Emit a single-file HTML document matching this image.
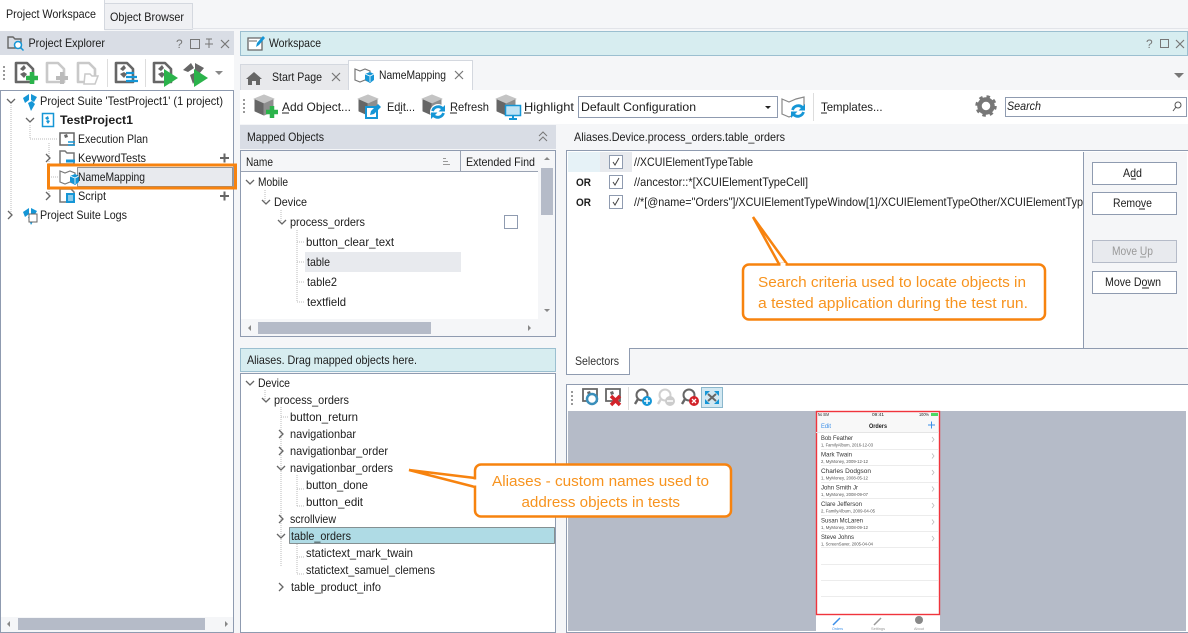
<!DOCTYPE html>
<html><head><meta charset="utf-8"><style>
html,body{margin:0;padding:0;background:#f5f6f8;width:1188px;height:633px;overflow:hidden}
svg{display:block}
text{font-family:"Liberation Sans",sans-serif;font-size:12px;fill:#1c1c1c}
.c{fill:#f7931e;font-size:15px}
.p{font-size:6.5px;fill:#333}
.s{font-size:4.5px;fill:#555}
</style></head><body>
<svg width="1188" height="633" viewBox="0 0 1188 633" xmlns="http://www.w3.org/2000/svg">
<defs>
<g id="doc"><path d="M2 21V2h11l6 6v13z" fill="#fff" stroke="#666" stroke-width="2.6" stroke-linejoin="round"/><path d="M6 8l4-4 2 3-3 3zM6 13l4-2 3 2-3 4z" fill="#666"/></g>
<g id="docd"><path d="M2 21V2h11l6 6v13z" fill="#fff" stroke="#c9c9c9" stroke-width="2.6" stroke-linejoin="round"/></g>
<g id="cube"><path d="M1 6l10-4 10 4-10 4z" fill="#c4c4c4" stroke="#c4c4c4" stroke-linejoin="round"/><path d="M11 11v11l-9-4V7z" fill="#666" stroke="#666" stroke-linejoin="round"/><path d="M11 11v11l9-4V7z" fill="#8e8e8e" stroke="#8e8e8e" stroke-linejoin="round"/></g>
<g id="logo"><path d="M2 5l6-4v6l-4 3zM10 1l6 3-3 5-3-2zM7 10l4-2 3 3-4 7z" fill="#1596d6"/></g>
<g id="nm"><path d="M1 3l5 2 5-2 5 2v11l-5-2-5 2-5-2z" fill="#fff" stroke="#777" stroke-width="1.2"/><path d="M11 8l5-2 4 2v6l-4 3-5-3z" fill="#1596d6"/><path d="M11 8l5 2 4-2M16 10v6" stroke="#fff" stroke-width=".8" fill="none"/></g>
<g id="lens"><circle cx="8" cy="7" r="5.5" fill="#fff" stroke="#666" stroke-width="2"/><path d="M4 11l-3 5" stroke="#666" stroke-width="2.4"/></g>
<g id="ref"><path d="M-5.5-1A6 6 0 0 1 4.500-3.500M5.500 1A6 6 0 0 1-4.500 3.500" fill="none" stroke="#1596d6" stroke-width="2.800"/><path d="M7-7v6.500h-6.500zM-7 7v-6.500h6.500z" fill="#1596d6"/></g>
<path id="down" d="M0 0l4 4 4-4" fill="none" stroke="#666" stroke-width="1.3"/>
<path id="right" d="M0 0l4 4-4 4" fill="none" stroke="#666" stroke-width="1.3"/>
</defs>

<!-- top tabs -->
<rect x="0" y="0" width="1188" height="31" fill="#f5f6f8"/>
<rect x="104.500" y="3.500" width="88" height="26" fill="#eff0f3" stroke="#d4d8df"/>
<path d="M192 28.500H1188" stroke="#e2e4e9"/>
<rect x="0" y="0" width="104.500" height="31" fill="#fff"/>
<path d="M104.500 0V30" stroke="#d4d8df"/>
<text x="6" y="18" textLength="90" lengthAdjust="spacingAndGlyphs">Project Workspace</text>
<text x="110" y="21" textLength="74" lengthAdjust="spacingAndGlyphs">Object Browser</text>

<!-- project explorer -->
<rect x="0" y="31" width="234" height="24" fill="#d9dde5"/>
<path d="M8 37h5l2 2h6v9H8z" fill="none" stroke="#666" stroke-width="1.400"/>
<circle cx="18" cy="45" r="3.500" fill="#fff" stroke="#1596d6" stroke-width="1.500"/><path d="M20.500 47.500l3 3" stroke="#1596d6" stroke-width="1.500"/>
<text x="28.500" y="47" textLength="76.500" lengthAdjust="spacingAndGlyphs">Project Explorer</text>
<text x="176" y="48" style="fill:#777">?</text>
<rect x="190.500" y="39.500" width="9" height="9" fill="none" stroke="#777"/>
<path d="M206 39h6M209 39v5M205 44h8M209 44v4" stroke="#777" fill="none"/>
<path d="M221 40l8 8M229 40l-8 8" stroke="#777" stroke-width="1.200"/>

<rect x="0" y="55" width="234" height="35" fill="#fff"/>
<path d="M4 66v2M4 70v2M4 74v2M4 78v2" stroke="#999" stroke-width="2"/>
<use href="#doc" x="14" y="61"/>
<path d="M32 72v12M26 78h12" stroke="#2bb34b" stroke-width="4.500"/>
<use href="#docd" x="45" y="61"/>
<path d="M62 72v12M56 78h12" stroke="#bbb" stroke-width="4"/>
<use href="#docd" x="76" y="61"/>
<path d="M85 74h5l2 2h6l-3 8H84z" fill="#fff" stroke="#c9c9c9" stroke-width="1.500"/>
<path d="M107.500 59v28" stroke="#ddd"/>
<use href="#doc" x="114" y="61"/>
<path d="M126 73h8M126 77h11M126 81h12" stroke="#1596d6" stroke-width="2.200"/>
<path d="M145.500 59v28" stroke="#ddd"/>
<use href="#doc" x="152" y="61"/>
<path d="M164 69l14 9-14 9z" fill="#2bb34b"/>
<path d="M183 70l8-7 3 5-6 4zM195 63l9 5-5 6-4-3zM190 75l4-2 4 3-5 8z" fill="#666"/>
<path d="M194 69l14 9-14 9z" fill="#2bb34b"/>
<path d="M215 71h8l-4 4z" fill="#888"/>

<rect x="0.500" y="90.500" width="233" height="542" fill="#fff" stroke="#8f9bb0"/>
<rect x="1" y="617" width="232" height="15" fill="#f5f6f8"/>
<rect x="18" y="618" width="187" height="12" fill="#b5bbc8"/>
<path d="M7 624l3-3v6z" fill="#888"/><path d="M225 621l3 3-3 3z" fill="#888"/>
<!-- tree lines -->
<path d="M11 105V215M30 125V139H58M49 143V196M49 177H58" stroke="#bbb" stroke-dasharray="1 1" fill="none"/>
<use href="#down" x="7" y="99"/><use href="#down" x="26" y="118"/>
<use href="#right" x="46" y="154"/><use href="#right" x="46" y="192"/><use href="#right" x="8" y="211"/>
<use href="#logo" x="21" y="93"/>
<rect x="42.500" y="113.500" width="11" height="13" fill="#fff" stroke="#1596d6" stroke-width="1.500"/><path d="M45 118l3-2 1 3-2 1zM46 121l2-1 2 1-2 3z" fill="#1596d6"/>
<path d="M60 133h14v12H60z" fill="#fff" stroke="#666" stroke-width="1.500"/><path d="M64 135l3-1 1 3-3 1z" fill="#666"/><path d="M68 142h7M68 145h7" stroke="#1596d6" stroke-width="1.500"/>
<path d="M60 164v-13h5l2 2h7v11z" fill="#fff" stroke="#777" stroke-width="1.500"/><path d="M66 161h9" stroke="#1596d6" stroke-width="3"/>
<path d="M60 202v-13h11l3 3v10z" fill="#fff" stroke="#777" stroke-width="1.500"/><rect x="66" y="193" width="9" height="10" fill="#1596d6"/><path d="M68 196h5M68 198h5M68 200h5" stroke="#fff"/>
<use href="#logo" x="21" y="207"/>
<rect x="29" y="214" width="8" height="8" fill="#fff" stroke="#666"/>
<text x="40" y="105" textLength="183" lengthAdjust="spacingAndGlyphs">Project Suite 'TestProject1' (1 project)</text>
<text x="60" y="124" textLength="73" lengthAdjust="spacingAndGlyphs" font-weight="bold">TestProject1</text>
<text x="78" y="143" textLength="70" lengthAdjust="spacingAndGlyphs">Execution Plan</text>
<text x="78" y="162" textLength="68" lengthAdjust="spacingAndGlyphs">KeywordTests</text>
<rect x="77.500" y="167.500" width="155" height="19" fill="#e8eaee" stroke="#333" stroke-dasharray="1 1"/>
<use href="#nm" x="59" y="168"/>
<text x="78" y="181" textLength="67" lengthAdjust="spacingAndGlyphs">NameMapping</text>
<text x="78" y="200" textLength="28" lengthAdjust="spacingAndGlyphs">Script</text>
<text x="40" y="219" textLength="87" lengthAdjust="spacingAndGlyphs">Project Suite Logs</text>
<path d="M220 158h9M224.500 153.500v9M220 196h9M224.500 191.500v9" stroke="#666" stroke-width="2"/>
<rect x="48.500" y="165" width="187" height="23" fill="none" stroke="#f7830f" stroke-width="3"/>

<!-- workspace -->
<rect x="240.500" y="31.500" width="947" height="24" fill="#d7edf0" stroke="#9bbfd0"/>
<path d="M248 38h14v12h-14z" fill="#fff" stroke="#666" stroke-width="1.300"/><path d="M249 41h8" stroke="#666"/>
<path d="M256 47l1-4 6-7 2 2-6 7z" fill="#1596d6"/>
<text x="269" y="47" textLength="52" lengthAdjust="spacingAndGlyphs">Workspace</text>
<text x="1146" y="48" style="fill:#777">?</text>
<rect x="1160.500" y="39.500" width="8" height="8" fill="none" stroke="#777"/>
<path d="M1176 40l8 8M1184 40l-8 8" stroke="#777" stroke-width="1.200"/>

<!-- doc tabs -->
<rect x="240.500" y="64.500" width="108" height="26" fill="#e8e9ec" stroke="#d4d8df"/>
<path d="M254 72l-8 7h2v6h4v-4h4v4h4v-6h2z" fill="#666"/>
<text x="272" y="81" textLength="50" lengthAdjust="spacingAndGlyphs">Start Page</text>
<path d="M332 73l8 8M340 73l-8 8" stroke="#777" stroke-width="1.200"/>
<rect x="348.500" y="60.500" width="124" height="30" fill="#fff" stroke="#d4d8df"/>
<use href="#nm" x="354" y="66"/>
<text x="379" y="79" textLength="67" lengthAdjust="spacingAndGlyphs">NameMapping</text>
<path d="M455 71l8 8M463 71l-8 8" stroke="#777" stroke-width="1.200"/>
<path d="M1174 73h10l-5 5z" fill="#777"/>

<!-- toolbar -->
<rect x="240" y="90" width="948" height="34" fill="#fff"/>
<rect x="349" y="88" width="123" height="3" fill="#fff"/>
<path d="M244 99v2M244 103v2M244 107v2M244 111v2" stroke="#999" stroke-width="2"/>
<use href="#cube" x="253" y="93"/>
<path d="M272 106v12M266 112h12" stroke="#2bb34b" stroke-width="4.500"/>
<text x="282" y="111" textLength="69" lengthAdjust="spacingAndGlyphs">Add Object...</text>
<path d="M282 113h7" stroke="#222"/>
<use href="#cube" x="357" y="93"/>
<rect x="366" y="107" width="11" height="11" fill="#fff" stroke="#1596d6" stroke-width="2"/>
<path d="M370 115l1-4 7-7 3 3-7 7z" fill="#1596d6"/>
<text x="387" y="111" textLength="28" lengthAdjust="spacingAndGlyphs">Edit...</text>
<path d="M399 113h3" stroke="#222"/>
<use href="#cube" x="421" y="93"/>
<circle cx="438" cy="112" r="8" fill="#fff"/><use href="#ref" x="438" y="112"/>
<text x="450" y="111" textLength="39" lengthAdjust="spacingAndGlyphs">Refresh</text>
<path d="M450 113h7" stroke="#222"/>
<use href="#cube" x="495" y="93"/>
<rect x="505.500" y="105.500" width="15" height="10" fill="#bfe3f5" stroke="#1596d6" stroke-width="1.500"/>
<path d="M513 115v3M509 119h8" stroke="#1596d6" stroke-width="2"/>
<text x="524" y="111" textLength="50" lengthAdjust="spacingAndGlyphs">Highlight</text>
<path d="M524 113h7" stroke="#222"/>
<rect x="578.500" y="96.500" width="199" height="21" fill="#fff" stroke="#8f9bb0"/>
<text x="581" y="111" textLength="115" lengthAdjust="spacingAndGlyphs">Default Configuration</text>
<path d="M765 106h6l-3 3z" fill="#222"/>
<path d="M782 99l7 3 7-3 8-2v12h-8v5l-7 3-7-3z" fill="#fff" stroke="#888" stroke-width="1.200"/>
<circle cx="798" cy="111" r="8" fill="#fff"/><use href="#ref" x="798" y="111"/>
<path d="M813.500 93v28" stroke="#ddd"/>
<text x="821" y="111" textLength="61.500" lengthAdjust="spacingAndGlyphs">Templates...</text>
<path d="M821 113h6" stroke="#222"/>
<circle cx="986" cy="106" r="6.500" fill="none" stroke="#777" stroke-width="4.500"/>
<circle cx="986" cy="106" r="9.500" fill="none" stroke="#777" stroke-width="2.500" stroke-dasharray="3.500 4"/>
<rect x="1005.500" y="97.500" width="181" height="19" fill="#fff" stroke="#8f9bb0"/>
<text x="1007" y="110" textLength="34" lengthAdjust="spacingAndGlyphs" font-style="italic">Search</text>
<circle cx="1178" cy="105" r="3" fill="none" stroke="#555"/><path d="M1176 107l-3 4" stroke="#555"/>

<!-- Mapped Objects -->
<rect x="240" y="125" width="316" height="24" fill="#d9dde5"/>
<text x="247" y="141" textLength="77" lengthAdjust="spacingAndGlyphs">Mapped Objects</text>
<path d="M539 136l4-4 4 4M539 141l4-4 4 4" fill="none" stroke="#777"/>
<rect x="240.500" y="150.500" width="315" height="186" fill="#fff" stroke="#8f9bb0"/>
<rect x="241" y="151" width="297" height="20" fill="#f5f6f8"/>
<path d="M241 171.500H538M460.500 151v20" stroke="#9aa3b3"/>
<text x="246" y="166" textLength="27" lengthAdjust="spacingAndGlyphs">Name</text>
<path d="M443 158.500h3M443 161.500h5M443 164.500h7" stroke="#999"/>
<text x="466" y="166" textLength="69" lengthAdjust="spacingAndGlyphs">Extended Find</text>
<rect x="538" y="151" width="17" height="185" fill="#f5f6f8"/>
<rect x="241" y="319" width="314" height="17" fill="#f5f6f8"/>
<rect x="541" y="168" width="12" height="47" fill="#b5bbc8"/>
<rect x="258" y="322" width="173" height="12" fill="#b5bbc8"/>
<path d="M544 160l3-3 3 3zM544 309l3 3 3-3zM251 325l-3 3 3 3zM528 325l3 3-3 3z" fill="#888"/>
<rect x="305" y="252" width="156" height="20" fill="#e8eaee"/>
<path d="M265 190v12M281 210v12M297 230v72M297 242h8M297 262h8M297 282h8M297 302h8" stroke="#bbb" stroke-dasharray="1 1" fill="none"/>
<use href="#down" x="246" y="180"/><use href="#down" x="262" y="200"/><use href="#down" x="278" y="220"/>
<text x="258" y="186" textLength="30" lengthAdjust="spacingAndGlyphs">Mobile</text>
<text x="274" y="206" textLength="33" lengthAdjust="spacingAndGlyphs">Device</text>
<text x="290" y="226" textLength="75" lengthAdjust="spacingAndGlyphs">process_orders</text>
<text x="306" y="246" textLength="88" lengthAdjust="spacingAndGlyphs">button_clear_text</text>
<text x="307" y="266" textLength="23" lengthAdjust="spacingAndGlyphs">table</text>
<text x="307" y="286" textLength="30" lengthAdjust="spacingAndGlyphs">table2</text>
<text x="307" y="306" textLength="39" lengthAdjust="spacingAndGlyphs">textfield</text>
<rect x="504.500" y="215.500" width="13" height="13" fill="#fff" stroke="#8f9bb0"/>

<!-- Aliases -->
<rect x="240.500" y="348.500" width="315" height="23" fill="#d7edf0" stroke="#9bbfd0"/>
<text x="247" y="364" textLength="170" lengthAdjust="spacingAndGlyphs">Aliases. Drag mapped objects here.</text>
<rect x="240.500" y="373.500" width="315" height="259" fill="#fff" stroke="#8f9bb0"/>
<rect x="289.500" y="527.500" width="265" height="16" fill="#afdbe5" stroke="#333" stroke-dasharray="1 1"/>
<path d="M265 390v10M281 407v160M281 417h8M297 475v31M297 489h8M297 506h8M297 544v30M297 557h8M297 574h8" stroke="#bbb" stroke-dasharray="1 1" fill="none"/>
<use href="#down" x="246" y="381"/><use href="#down" x="262" y="398"/>
<use href="#right" x="279" y="430"/><use href="#right" x="279" y="447"/><use href="#down" x="277" y="466"/>
<use href="#right" x="279" y="515"/><use href="#down" x="277" y="534"/><use href="#right" x="279" y="583"/>
<text x="258" y="387" textLength="32" lengthAdjust="spacingAndGlyphs">Device</text>
<text x="274" y="404" textLength="75" lengthAdjust="spacingAndGlyphs">process_orders</text>
<text x="290" y="421" textLength="68" lengthAdjust="spacingAndGlyphs">button_return</text>
<text x="290" y="438" textLength="66" lengthAdjust="spacingAndGlyphs">navigationbar</text>
<text x="290" y="455" textLength="98" lengthAdjust="spacingAndGlyphs">navigationbar_order</text>
<text x="290" y="472" textLength="103" lengthAdjust="spacingAndGlyphs">navigationbar_orders</text>
<text x="306" y="489" textLength="62" lengthAdjust="spacingAndGlyphs">button_done</text>
<text x="306" y="506" textLength="57" lengthAdjust="spacingAndGlyphs">button_edit</text>
<text x="290" y="523" textLength="46" lengthAdjust="spacingAndGlyphs">scrollview</text>
<text x="291" y="540" textLength="60" lengthAdjust="spacingAndGlyphs">table_orders</text>
<text x="306" y="557" textLength="107" lengthAdjust="spacingAndGlyphs">statictext_mark_twain</text>
<text x="306" y="574" textLength="129" lengthAdjust="spacingAndGlyphs">statictext_samuel_clemens</text>
<text x="291" y="591" textLength="90" lengthAdjust="spacingAndGlyphs">table_product_info</text>

<!-- Selectors -->
<text x="574" y="141" textLength="211" lengthAdjust="spacingAndGlyphs">Aliases.Device.process_orders.table_orders</text>
<rect x="566.500" y="150.500" width="622" height="198" fill="#fff" stroke="#8f9bb0"/>
<rect x="568" y="152" width="32" height="20" fill="#e6f2f7"/>
<rect x="600" y="152" width="32" height="20" fill="#e8eaee"/>
<g fill="#fff" stroke="#8f9bb0"><rect x="609.500" y="155.500" width="13" height="13"/><rect x="609.500" y="175.500" width="13" height="13"/><rect x="609.500" y="195.500" width="13" height="13"/></g>
<path d="M613 162l2 3 4-7M613 182l2 3 4-7M613 202l2 3 4-7" fill="none" stroke="#444"/>
<text x="576" y="186" textLength="15" lengthAdjust="spacingAndGlyphs" font-weight="bold" style="font-size:11px">OR</text>
<text x="576" y="206" textLength="15" lengthAdjust="spacingAndGlyphs" font-weight="bold" style="font-size:11px">OR</text>
<text x="634" y="166" textLength="119" lengthAdjust="spacingAndGlyphs">//XCUIElementTypeTable</text>
<text x="634" y="186" textLength="174" lengthAdjust="spacingAndGlyphs">//ancestor::*[XCUIElementTypeCell]</text>
<text x="634" y="206" textLength="449" lengthAdjust="spacingAndGlyphs">//*[@name="Orders"]/XCUIElementTypeWindow[1]/XCUIElementTypeOther/XCUIElementTyp</text>
<rect x="1083" y="152" width="104" height="196" fill="#f5f6f8"/>
<path d="M1083.500 152v196" stroke="#8f9bb0"/>
<g fill="#fff" stroke="#8f9bb0"><rect x="1092.500" y="162.500" width="84" height="22"/><rect x="1092.500" y="192.500" width="84" height="22"/><rect x="1092.500" y="271.500" width="84" height="22"/></g>
<rect x="1092.500" y="240.500" width="84" height="22" fill="#e8eaee" stroke="#b5bbc8"/>
<text x="1123" y="177" textLength="19" lengthAdjust="spacingAndGlyphs">Add</text>
<path d="M1131 179h5" stroke="#222"/>
<text x="1113" y="207" textLength="39" lengthAdjust="spacingAndGlyphs">Remove</text>
<path d="M1139 209h6" stroke="#222"/>
<text x="1112" y="255" textLength="41" lengthAdjust="spacingAndGlyphs" style="fill:#999">Move Up</text>
<path d="M1140 257h6" stroke="#999"/>
<text x="1105" y="286" textLength="56" lengthAdjust="spacingAndGlyphs">Move Down</text>
<path d="M1142 288h7" stroke="#222"/>
<path d="M566.500 348.500V374.500H629.500V348.500" fill="#fff" stroke="#8f9bb0"/>
<rect x="567" y="347" width="62" height="3" fill="#fff"/>
<text x="575" y="365" textLength="44" lengthAdjust="spacingAndGlyphs" style="fill:#333">Selectors</text>

<!-- preview -->
<rect x="566.500" y="384.500" width="622" height="248" fill="#fff" stroke="#8f9bb0"/>
<rect x="568" y="411" width="618" height="220" fill="#b5bbc8"/>
<path d="M572 391v2M572 395v2M572 399v2M572 403v2" stroke="#999" stroke-width="2"/>
<path d="M583 389h14v12h-14z" fill="#fff" stroke="#666" stroke-width="1.800"/>
<path d="M587 392l3-1 1 3-3 1z" fill="#666"/>
<circle cx="592" cy="399" r="5" fill="#fff" stroke="#3a8fbb" stroke-width="2.500"/>
<path d="M606 389h14v12h-14z" fill="#fff" stroke="#666" stroke-width="1.800"/>
<path d="M610 392l3-1 1 3-3 1z" fill="#666"/>
<path d="M611 396l9 9M620 396l-9 9" stroke="#d2232a" stroke-width="3.500"/>
<path d="M628.500 387v23" stroke="#ddd"/>
<use href="#lens" x="634" y="388"/><circle cx="647" cy="401" r="5" fill="#1596d6"/><path d="M644 401h6M647 398v6" stroke="#fff" stroke-width="1.500"/>
<g opacity=".3"><use href="#lens" x="657" y="388"/></g><circle cx="670" cy="401" r="5" fill="#ccc"/><path d="M667 401h6" stroke="#fff" stroke-width="1.500"/>
<use href="#lens" x="681" y="388"/><circle cx="694" cy="401" r="5" fill="#d2232a"/><path d="M692 399l4 4M696 399l-4 4" stroke="#fff" stroke-width="1.300"/>
<rect x="701.500" y="387.500" width="21" height="20" fill="#d2e8f2" stroke="#8bb7cc"/>
<path d="M705 391h5l-5 5zM719 391h-5l5 5zM705 404h5l-5-5zM719 404h-5l5-5z" fill="#1596d6"/>
<path d="M708 394l8 7M716 394l-8 7" stroke="#666" stroke-width="2"/>

<!-- phone -->
<rect x="816" y="411" width="124" height="220" fill="#fff"/>
<rect x="816" y="412" width="124" height="20" fill="#f8f8f8"/>
<rect x="816.500" y="411.500" width="123" height="203" fill="none" stroke="#f0343c" stroke-width="1.400"/>
<g style="filter:blur(.3px)">
<text x="818" y="416" style="font-size:4.5px" textLength="11" lengthAdjust="spacingAndGlyphs">No SIM</text>
<text x="872" y="416" style="font-size:4.5px" textLength="12" lengthAdjust="spacingAndGlyphs">09:41</text>
<text x="919" y="416" style="font-size:4.5px" textLength="10" lengthAdjust="spacingAndGlyphs">100%</text>
<rect x="931" y="413" width="7" height="3" fill="#4cd964"/>
<text x="821" y="428" style="font-size:6.500px;fill:#3b8fe8" textLength="10" lengthAdjust="spacingAndGlyphs">Edit</text>
<text x="869" y="428" style="font-size:6.500px;font-weight:bold" textLength="18" lengthAdjust="spacingAndGlyphs">Orders</text>
<path d="M928 425h7M931.500 421.500v7" stroke="#3b8fe8"/>
<text class="p" x="821" y="440" textLength="32" lengthAdjust="spacingAndGlyphs">Bob Feather</text>
<text class="s" x="821" y="446.500" textLength="52" lengthAdjust="spacingAndGlyphs">1, FamilyAlbum, 2016-12-03</text>
<text class="p" x="821" y="456.500" textLength="31" lengthAdjust="spacingAndGlyphs">Mark Twain</text>
<text class="s" x="821" y="463" textLength="47" lengthAdjust="spacingAndGlyphs">2, MyMoney, 2009-12-12</text>
<text class="p" x="821" y="473" textLength="50" lengthAdjust="spacingAndGlyphs">Charles Dodgson</text>
<text class="s" x="821" y="479.500" textLength="47" lengthAdjust="spacingAndGlyphs">1, MyMoney, 2008-05-12</text>
<text class="p" x="821" y="489.500" textLength="37" lengthAdjust="spacingAndGlyphs">John Smith Jr</text>
<text class="s" x="821" y="496" textLength="47" lengthAdjust="spacingAndGlyphs">1, MyMoney, 2008-09-07</text>
<text class="p" x="821" y="506" textLength="41" lengthAdjust="spacingAndGlyphs">Clare Jefferson</text>
<text class="s" x="821" y="512.500" textLength="54" lengthAdjust="spacingAndGlyphs">2, FamilyAlbum, 2009-04-05</text>
<text class="p" x="821" y="522.500" textLength="42" lengthAdjust="spacingAndGlyphs">Susan McLaren</text>
<text class="s" x="821" y="529" textLength="47" lengthAdjust="spacingAndGlyphs">1, MyMoney, 2008-09-12</text>
<text class="p" x="821" y="539" textLength="33" lengthAdjust="spacingAndGlyphs">Steve Johns</text>
<text class="s" x="821" y="545.500" textLength="52" lengthAdjust="spacingAndGlyphs">1, ScreenSaver, 2005-04-04</text>
<path d="M833 625l7-7" stroke="#3b8fe8" stroke-width="1.500"/>
<path d="M874 625l7-7" stroke="#999" stroke-width="1.500"/>
<circle cx="919" cy="620" r="4" fill="#888"/>
<text x="832" y="630" style="font-size:4px;fill:#3b8fe8" textLength="11" lengthAdjust="spacingAndGlyphs">Orders</text>
<text x="871" y="630" style="font-size:4px;fill:#999" textLength="14" lengthAdjust="spacingAndGlyphs">Settings</text>
<text x="914" y="630" style="font-size:4px;fill:#999" textLength="10" lengthAdjust="spacingAndGlyphs">About</text>
</g>
<path d="M816 432.500H939" stroke="#e5e5e5"/>
<path d="M821 449.500H938M821 465.500H938M821 482.500H938M821 498.500H938M821 515.500H938M821 531.500H938M821 547.500H938M821 564.500H938M821 580.500H938M821 596.500H938" stroke="#ececec"/>
<path d="M932 437l2 2.500-2 2.500M932 453.500l2 2.500-2 2.500M932 470l2 2.500-2 2.500M932 486.500l2 2.500-2 2.500M932 503l2 2.500-2 2.500M932 519.500l2 2.500-2 2.500M932 536l2 2.500-2 2.500" fill="none" stroke="#bbb" stroke-width=".8"/>

<!-- callouts -->
<path d="M753 217L779 264H787Z" fill="#fff" stroke="#f7830f" stroke-width="2.500"/>
<rect x="743" y="264.500" width="302" height="55" rx="6" fill="#fff" stroke="#f7830f" stroke-width="2.500"/>
<path d="M780.500 264.500h5" stroke="#fff" stroke-width="3"/>
<text class="c" x="758" y="287" textLength="268" lengthAdjust="spacingAndGlyphs">Search criteria used to locate objects in</text>
<text class="c" x="758" y="308" textLength="270" lengthAdjust="spacingAndGlyphs">a tested application during the test run.</text>
<path d="M409 470L475 478V487Z" fill="#fff" stroke="#f7830f" stroke-width="2.500"/>
<rect x="475" y="464.500" width="256" height="52" rx="6" fill="#fff" stroke="#f7830f" stroke-width="2.500"/>
<path d="M475 479.500v6" stroke="#fff" stroke-width="3"/>
<text class="c" x="492" y="486" textLength="217" lengthAdjust="spacingAndGlyphs">Aliases - custom names used to</text>
<text class="c" x="521.500" y="507" textLength="158.500" lengthAdjust="spacingAndGlyphs">address objects in tests</text>
</svg>
</body></html>
